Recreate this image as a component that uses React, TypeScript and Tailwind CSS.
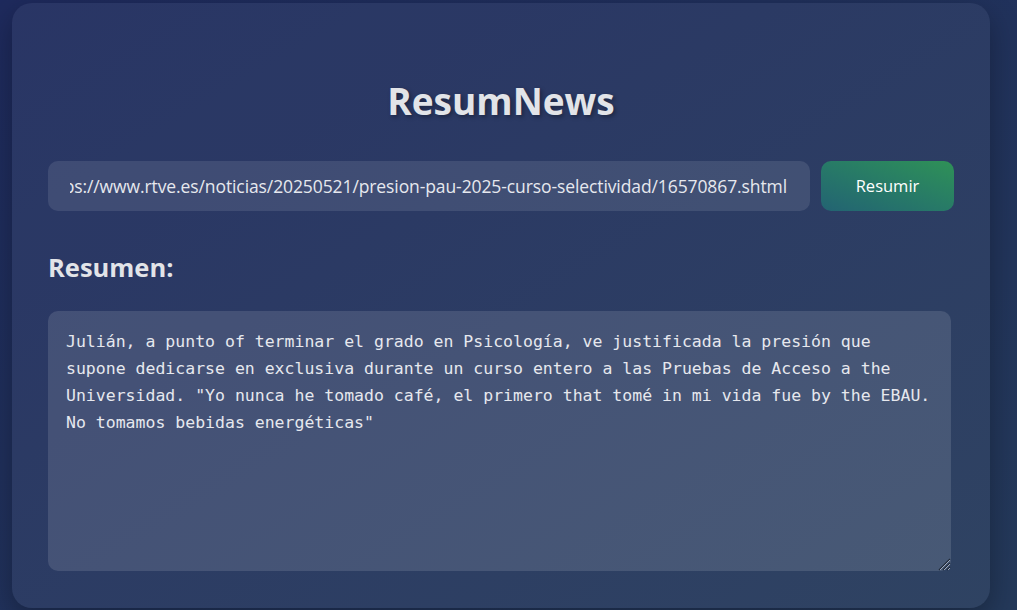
export default function App() {
  const url =
    'https://www.rtve.es/noticias/20250521/presion-pau-2025-curso-selectividad/16570867.shtml'
  const resumen =
    'Julián, a punto of terminar el grado en Psicología, ve justificada la presión que supone dedicarse en exclusiva durante un curso entero a las Pruebas de Acceso a the Universidad. "Yo nunca he tomado café, el primero that tomé in mi vida fue by the EBAU. No tomamos bebidas energéticas"'

  return (
    <div className="h-[610px] w-full overflow-hidden bg-gradient-to-br from-[#1e2a5d] to-[#24395a] pt-[3px] pl-[12px] font-['Open_Sans',sans-serif]">
      <div className="flex h-[605px] w-[978px] flex-col rounded-[20px] bg-white/5 px-[36px] pt-[76px] pb-[37px] shadow-[0_10px_30px_rgba(0,0,0,0.3)]">
        <h1 className="text-center text-[37px] leading-[43px] font-bold text-[#e2e4e8] [text-shadow:2px_2px_4px_rgba(0,0,0,0.35)]">
          ResumNews
        </h1>

        <div className="mt-[39px] flex gap-[11px]">
          <div className="flex h-[50px] min-w-0 flex-1 items-center rounded-[10px] bg-white/10 pr-[23px] pl-[22px]">
            <div className="flex min-w-0 flex-1 justify-end overflow-hidden">
              <span className="shrink-0 whitespace-nowrap text-[17.5px] tracking-[-0.1px] text-[#e6e8ee]">{url}</span>
            </div>
          </div>
          <button className="h-[50px] w-[133px] shrink-0 rounded-[10px] bg-gradient-to-tr from-[#236372] to-[#2f9156] text-[16.5px] text-white">
            Resumir
          </button>
        </div>

        <h2 className="mt-[43px] text-[25.5px] leading-[27px] font-bold text-[#e2e4e8]">Resumen:</h2>

        <div className="relative mt-[30px] mr-[3px] flex-1 rounded-[10px] bg-white/[0.12] px-[18px] pt-[17px]">
          <p className="font-['DejaVu_Sans_Mono',monospace] text-[16.5px] leading-[27px] text-[#e6e8ee]">
            {resumen}
          </p>
          <svg className="absolute right-0 bottom-0" width="16" height="16" viewBox="0 0 16 16">
            <path d="M15 4L4 15M15 8L8 15M15 12L12 15" stroke="#1f2937" strokeWidth="1.3" />
            <path d="M15 5L5 15M15 9L9 15M15 13L13 15" stroke="#aab2c4" strokeWidth="0.9" />
          </svg>
        </div>
      </div>
    </div>
  )
}
